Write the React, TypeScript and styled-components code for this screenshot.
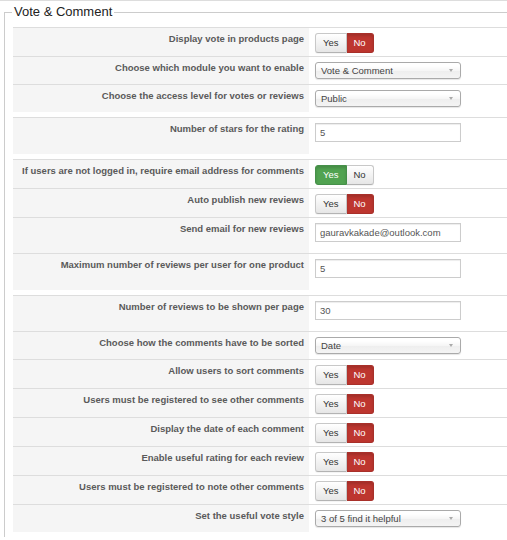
import styled, { createGlobalStyle } from "styled-components";

type Kind = "toggle" | "select" | "input";

interface Field {
  label: string;
  kind: Kind;
  value: string;
}

const groups: Field[][] = [
  [
    { label: "Display vote in products page", kind: "toggle", value: "no" },
    { label: "Choose which module you want to enable", kind: "select", value: "Vote & Comment" },
    { label: "Choose the access level for votes or reviews", kind: "select", value: "Public" },
  ],
  [{ label: "Number of stars for the rating", kind: "input", value: "5" }],
  [
    { label: "If users are not logged in, require email address for comments", kind: "toggle", value: "yes" },
    { label: "Auto publish new reviews", kind: "toggle", value: "no" },
    { label: "Send email for new reviews", kind: "input", value: "gauravkakade@outlook.com" },
    { label: "Maximum number of reviews per user for one product", kind: "input", value: "5" },
  ],
  [
    { label: "Number of reviews to be shown per page", kind: "input", value: "30" },
    { label: "Choose how the comments have to be sorted", kind: "select", value: "Date" },
    { label: "Allow users to sort comments", kind: "toggle", value: "no" },
    { label: "Users must be registered to see other comments", kind: "toggle", value: "no" },
    { label: "Display the date of each comment", kind: "toggle", value: "no" },
    { label: "Enable useful rating for each review", kind: "toggle", value: "no" },
    { label: "Users must be registered to note other comments", kind: "toggle", value: "no" },
    { label: "Set the useful vote style", kind: "select", value: "3 of 5 find it helpful" },
  ],
];

export default function App() {
  return (
    <>
      <GlobalStyle />
      <TopRule />
      <Fieldset>
        <Legend>Vote &amp; Comment</Legend>
        {groups.map((rows, gi) => (
          <Group key={gi}>
            {rows.map((f) => (
              <Row key={f.label}>
                <Label>{f.label}</Label>
                <Value>
                  {f.kind === "toggle" && (
                    <Toggle>
                      <ToggleBtn $active={f.value === "yes" ? "yes" : undefined} $first>
                        Yes
                      </ToggleBtn>
                      <ToggleBtn $active={f.value === "no" ? "no" : undefined}>No</ToggleBtn>
                    </Toggle>
                  )}
                  {f.kind === "select" && (
                    <Select>
                      <span>{f.value}</span>
                      <Arrow />
                    </Select>
                  )}
                  {f.kind === "input" && <Input>{f.value}</Input>}
                </Value>
              </Row>
            ))}
          </Group>
        ))}
      </Fieldset>
    </>
  );
}

const GlobalStyle = createGlobalStyle`
  html, body {
    margin: 0;
    padding: 0;
    background: #fff;
    overflow: hidden;
  }
  body {
    font-family: "Liberation Sans", Arial, sans-serif;
  }
`;

const TopRule = styled.div`
  height: 0;
  border-top: 1px solid #ddd;
`;

const Fieldset = styled.fieldset`
  margin: 3px -40px 0 4px;
  padding: 7px 0 0 8px;
  border: 1px solid #ccc;
  border-bottom: none;
  min-width: 0;
`;

const Legend = styled.legend`
  margin-left: -1px;
  padding: 0 2px;
  font-size: 13px;
  line-height: 16px;
  color: #222;
`;

const Group = styled.div`
  display: flex;
  flex-direction: column;
  margin-bottom: 5px;
`;

const Row = styled.div`
  display: grid;
  grid-template-columns: 296px 1fr;
  border-top: 1px solid #ddd;
`;

const Label = styled.div`
  background: #f5f5f5;
  padding: 5px 5px 0;
  text-align: right;
  font-size: 9.5px;
  line-height: 12px;
  font-weight: bold;
  color: #5a5a5a;
`;

const Value = styled.div`
  padding: 5px 6px 0;
  display: flex;
  align-items: flex-start;
`;

const Toggle = styled.div`
  display: flex;
  margin-bottom: 3px;
`;

const ToggleBtn = styled.div<{ $active?: "yes" | "no"; $first?: boolean }>`
  height: 20px;
  box-sizing: border-box;
  padding: 0 7px;
  font-size: 9.5px;
  line-height: 18px;
  border: 1px solid #c8c8c8;
  border-bottom-color: #b3b3b3;
  border-radius: ${(p) => (p.$first ? "3px 0 0 3px" : "0 3px 3px 0")};
  ${(p) => (p.$first ? "" : "border-left: none;")}
  color: ${(p) => (p.$active ? "#fff" : "#333")};
  background: ${(p) =>
    p.$active === "no"
      ? "#bd362f"
      : p.$active === "yes"
      ? "#51a351"
      : "linear-gradient(#ffffff, #e6e6e6)"};
  ${(p) =>
    p.$active === "no"
      ? "border-color: #a8302a;"
      : p.$active === "yes"
      ? "border-color: #46904a;"
      : ""}
  box-shadow: ${(p) => (p.$active ? "inset 0 2px 3px rgba(0,0,0,0.15)" : "0 1px 1px rgba(0,0,0,0.05)")};
`;

const Select = styled.div`
  position: relative;
  width: 146px;
  height: 17px;
  box-sizing: border-box;
  margin-bottom: 5px;
  padding: 0 0 0 5px;
  border: 1px solid #aaa;
  border-radius: 3px;
  background: linear-gradient(#ffffff 20%, #f6f6f6 50%, #eeeeee 52%, #f4f4f4 100%);
  box-shadow: 0 1px 1px rgba(0, 0, 0, 0.1);
  font-size: 9.5px;
  line-height: 15px;
  color: #444;
`;

const Arrow = styled.i`
  position: absolute;
  right: 7px;
  top: 6px;
  width: 0;
  height: 0;
  border-left: 2.5px solid transparent;
  border-right: 2.5px solid transparent;
  border-top: 3px solid #aaa;
`;

const Input = styled.div`
  width: 146px;
  height: 19px;
  box-sizing: border-box;
  margin-bottom: 11.5px;
  padding: 0 4px;
  border: 1px solid #ccc;
  box-shadow: inset 0 1px 1px rgba(0, 0, 0, 0.075);
  font-size: 9.5px;
  line-height: 17px;
  color: #555;
`;
